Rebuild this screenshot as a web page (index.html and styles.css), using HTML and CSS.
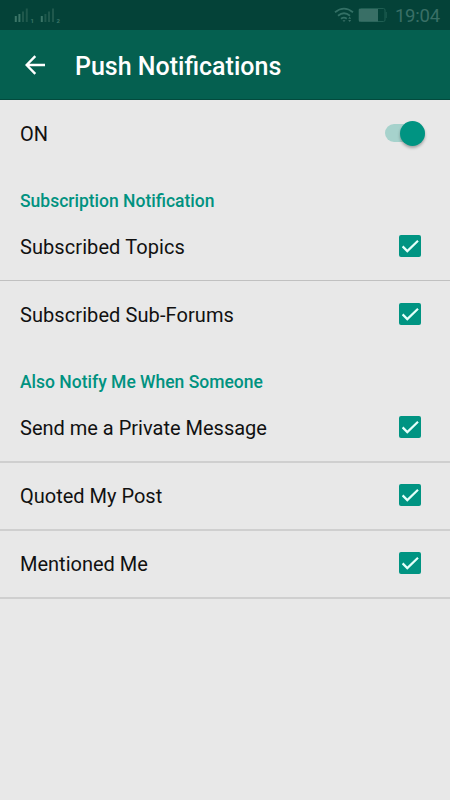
FILE: index.html
```html
<!DOCTYPE html>
<html lang="en">
<head>
  <meta charset="UTF-8">
  <meta name="viewport" content="width=device-width, initial-scale=1.0">
  <title>Push Notifications</title>
  <link rel="stylesheet" href="styles.css">
</head>
<body>
  <!-- Status Bar -->
  <div class="status-bar">
    <svg class="signal" width="52" height="18" viewBox="0 0 52 18">
      <g stroke-width="2">
        <path class="bar-on" d="M1.8 16v-6M5.4 16V8M27.8 16v-6"/>
        <path class="bar-off" d="M9 16V5.5M12.8 16V2.5M31.4 16V8M35 16V5.5M39 16V2.5"/>
      </g>
      <text x="16.5" y="17">1</text>
      <text x="42.5" y="17">2</text>
    </svg>
    <div class="status-right">
      <svg class="wifi" width="20" height="18" viewBox="0 0 20 18">
        <path d="M1 6.2Q10 -1 19 6.2M4 9.7Q10 4.8 16 9.7M7 12.7Q10 10.5 12.8 12.7"/>
        <path class="fill" d="M8.5 14.2h3L10 16zM14.2 12.7h3l-1.5-2zM14.2 14h3l-1.5 2z"/>
      </svg>
      <svg class="battery" width="30" height="16" viewBox="0 0 30 16">
        <rect x="1" y="1.5" width="26" height="13" rx="1.5"/>
        <path class="fill" d="M1 2h19v12.5H1z"/>
        <path d="M28.2 5v6"/>
      </svg>
      <span class="time">19:04</span>
    </div>
  </div>

  <!-- Header -->
  <header class="app-bar">
    <svg class="back" width="20" height="20" viewBox="0 0 20 20">
      <path d="M20 10H2M10.3 1.2L1.6 10l8.7 8.8"/>
    </svg>
    <h1>Push Notifications</h1>
  </header>

  <main>
    <div class="row">
      <span>ON</span>
      <div class="switch"><div class="thumb"></div></div>
    </div>

    <!-- Subscriptions -->
    <h2>Subscription Notification</h2>
    <div class="row line">
      <span class="wide">Subscribed Topics</span>
      <svg class="check" viewBox="0 0 22 22"><path d="M3.6 11.4l4.7 4.7L19 5.8"/></svg>
    </div>
    <div class="row">
      <span class="wide">Subscribed Sub-Forums</span>
      <svg class="check" viewBox="0 0 22 22"><path d="M3.6 11.4l4.7 4.7L19 5.8"/></svg>
    </div>

    <!-- Other Notifications -->
    <h2>Also Notify Me When Someone</h2>
    <div class="group">
      <div class="row line">
        <span>Send me a Private Message</span>
        <svg class="check" viewBox="0 0 22 22"><path d="M3.6 11.4l4.7 4.7L19 5.8"/></svg>
      </div>
      <div class="row line">
        <span>Quoted My Post</span>
        <svg class="check" viewBox="0 0 22 22"><path d="M3.6 11.4l4.7 4.7L19 5.8"/></svg>
      </div>
      <div class="row line">
        <span>Mentioned Me</span>
        <svg class="check" viewBox="0 0 22 22"><path d="M3.6 11.4l4.7 4.7L19 5.8"/></svg>
      </div>
    </div>
  </main>
</body>
</html>
```

FILE: styles.css
```css
* {
  box-sizing: border-box;
}

body {
  font-family: Roboto, sans-serif;
  margin: 0;
  min-height: 100vh;
  background-color: #e8e8e8;
  color: #111;
}

.status-bar {
  display: flex;
  justify-content: space-between;
  height: 30px;
  padding: 6px 10px 0 14px;
  background-color: #044238;
}

.status-bar svg {
  fill: none;
}

.bar-on {
  stroke: #3b7567;
}

.bar-off {
  stroke: #1f584c;
}

.status-bar .signal text {
  fill: #3b7567;
  font-size: 6px;
  font-weight: bold;
}

.status-right {
  display: flex;
}

.wifi {
  stroke: #337065;
  stroke-width: 1.8;
}

.battery {
  margin: 1px 7px 0 4px;
  stroke: #1f5e52;
}

.status-bar .fill {
  fill: #396f66;
  stroke: none;
}

.time {
  color: #396f66;
  font-size: 18.5px;
  line-height: 20px;
  letter-spacing: -0.2px;
}

.app-bar {
  display: flex;
  align-items: center;
  height: 70px;
  padding: 3px 25px 0;
  background-color: #056050;
  border-bottom: 1px solid #034a3d;
  color: #fff;
}

.back {
  margin: 0 30px 3px 0;
  fill: none;
  stroke: #fff;
  stroke-width: 2.4;
}

h1 {
  margin: 0;
  font-size: 25px;
  font-weight: 500;
}

h2 {
  height: 45px;
  margin: 0;
  padding: 22px 20px 0;
  color: #009280;
  font-size: 17.5px;
  font-weight: 500;
  line-height: 22px;
}

.row {
  display: flex;
  justify-content: space-between;
  align-items: center;
  height: 68px;
  padding: 0 29px 0 20px;
  font-size: 20px;
}

.wide {
  letter-spacing: 0.08px;
}

.line {
  border-bottom: 1px solid #c0c0c0;
}

.group {
  padding-top: 1px;
}

.group .line {
  border-bottom: 2px solid #cfcfcf;
}

.check {
  width: 22px;
  height: 22px;
  margin-bottom: 2px;
  border-radius: 2px;
  background-color: #009482;
  fill: none;
  stroke: #e4fffa;
  stroke-width: 2.2;
}

.switch {
  display: flex;
  justify-content: flex-end;
  align-items: center;
  width: 40px;
  height: 18px;
  margin: 0 -4px 2px 0;
  border-radius: 9px;
  background-color: #a6d2cc;
}

.thumb {
  width: 25px;
  height: 25px;
  flex-shrink: 0;
  border-radius: 50%;
  background-color: #009482;
  box-shadow: 0 2px 3px rgba(0, 0, 0, 0.3);
}
```
